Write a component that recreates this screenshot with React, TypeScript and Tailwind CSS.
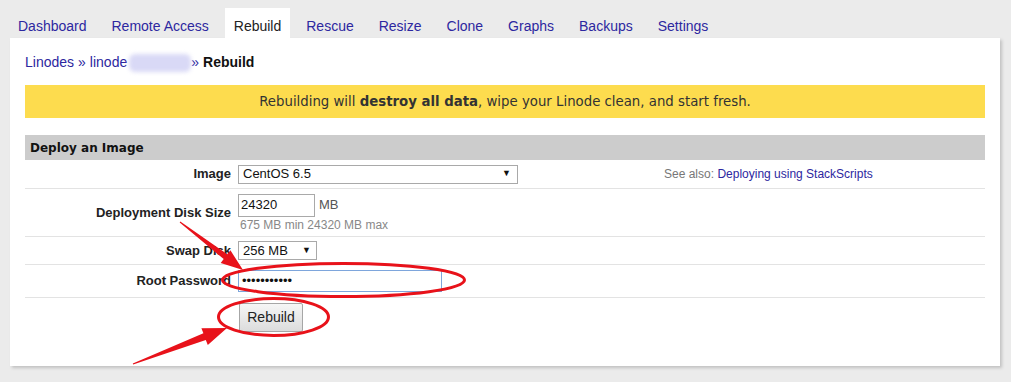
import React from "react";

const tabs = ["Dashboard", "Remote Access", "Rebuild", "Rescue", "Resize", "Clone", "Graphs", "Backups", "Settings"];

function Row({ label, children, className }: { label: string; children?: React.ReactNode; className: string }) {
  return (
    <div className={`flex items-center border-b border-[#e3e3e3] ${className}`}>
      <div className="w-[213px] shrink-0 pr-[7px] text-right text-[13px] font-bold text-[#222]">{label}</div>
      <div className="flex-1">{children}</div>
    </div>
  );
}

function Annotations() {
  return (
    <svg className="pointer-events-none absolute left-0 top-0" width="1011" height="382" viewBox="0 0 1011 382">
      <ellipse cx="343.5" cy="280" rx="121" ry="16.5" fill="none" stroke="#e8121a" strokeWidth="3" />
      <ellipse cx="273.5" cy="317" rx="55" ry="18.5" fill="none" stroke="#e8121a" strokeWidth="3" />
      <polygon fill="#e8121a" points="180.3,221.6 227.3,254.3 230.4,250.3 243,270 220.7,263.1 223.7,259.1 179.7,222.4" />
      <polygon fill="#e8121a" points="133.2,364.5 205.8,339.9 207.8,345 227,328 201.4,328.2 203.4,333.3 132.8,363.5" />
    </svg>
  );
}

export default function App() {
  return (
    <div className="relative h-[382px] w-[1011px] overflow-hidden bg-[#ebebeb] font-['Liberation_Sans',Arial,sans-serif]">
      <div className="flex gap-[7px] pl-[9px] pt-[8px]">
        {tabs.map((t) =>
          t === "Rebuild" ? (
            <div key={t} className="h-[30px] bg-white px-[9px] pt-[10px] text-[14px] leading-[17px] text-[#222]">
              {t}
            </div>
          ) : (
            <div key={t} className="h-[30px] px-[9px] pt-[10px] text-[14px] leading-[17px] text-[#2d27a0]">
              {t}
            </div>
          )
        )}
      </div>

      <div className="ml-[10px] h-[328px] w-[990px] bg-white px-[15px] pt-[16px] shadow-[2px_2px_3px_rgba(0,0,0,0.18)]">
        <div className="flex h-[17px] items-center text-[14px] leading-[17px]">
          <span className="text-[#2d27a0]">Linodes</span>
          <span className="ml-[4px] text-[#2d27a0]">»</span>
          <span className="ml-[4px] text-[#2d27a0]">linode</span>
          <span className="ml-[2px] inline-block h-[18px] w-[62px] rounded-[6px] bg-[#d9d9f6] blur-[2px]" />
          <span className="text-[#2d27a0]">»</span>
          <span className="ml-[4px] font-bold text-[#111]">Rebuild</span>
        </div>

        <div className="mt-[14px] flex h-[33px] items-center justify-center bg-[#fddc4e] font-['DejaVu_Sans',sans-serif] text-[13.3px] text-[#333]">
          <span>
            Rebuilding will <b>destroy all data</b>, wipe your Linode clean, and start fresh.
          </span>
        </div>

        <div className="mt-[17px] flex h-[25px] items-center bg-[#cccccc] pl-[5px] font-['DejaVu_Sans',sans-serif] text-[12px] font-bold text-[#111]">
          Deploy an Image
        </div>

        <Row label="Image" className="h-[29px]">
          <div className="flex items-center">
            <div className="flex h-[19px] w-[280px] items-center justify-between border border-[#a9a9a9] bg-white pl-[4px] pr-[6px] text-[13px] text-[#111]">
              <span>CentOS 6.5</span>
              <span className="text-[9px]">▼</span>
            </div>
            <div className="ml-[146px] text-[12px] text-[#777]">
              See also: <span className="text-[#2d27a0]">Deploying using StackScripts</span>
            </div>
          </div>
        </Row>

        <Row label="Deployment Disk Size" className="h-[48px]">
          <div className="flex flex-col">
            <div className="flex items-center">
              <div className="flex h-[23px] w-[77px] items-center border border-[#a9a9a9] pl-[2px] text-[13px] text-[#111]">24320</div>
              <span className="ml-[4px] text-[13px] text-[#555]">MB</span>
            </div>
            <div className="mt-[1px] pl-[2px] text-[12px] leading-[14px] text-[#888]">675 MB min 24320 MB max</div>
          </div>
        </Row>

        <Row label="Swap Disk" className="h-[28px]">
          <div className="flex h-[19px] w-[79px] items-center justify-between border border-[#a9a9a9] bg-white pl-[4px] pr-[5px] text-[13px] text-[#111]">
            <span>256 MB</span>
            <span className="text-[9px]">▼</span>
          </div>
        </Row>

        <Row label="Root Password" className="h-[33px]">
          <div className="flex h-[22px] w-[204px] items-center border border-[#7ea6dc] pl-[3px] text-[13px] text-[#111]">
            •••••••••••
          </div>
        </Row>

        <div className="pl-[214px] pt-[5px]">
          <div className="flex h-[29px] w-[64px] items-center justify-center rounded-[2px] border border-[#a6a6a6] bg-gradient-to-b from-[#f6f6f6] to-[#dcdcdc] text-[14px] text-[#222]">
            Rebuild
          </div>
        </div>
      </div>

      <Annotations />
    </div>
  );
}
